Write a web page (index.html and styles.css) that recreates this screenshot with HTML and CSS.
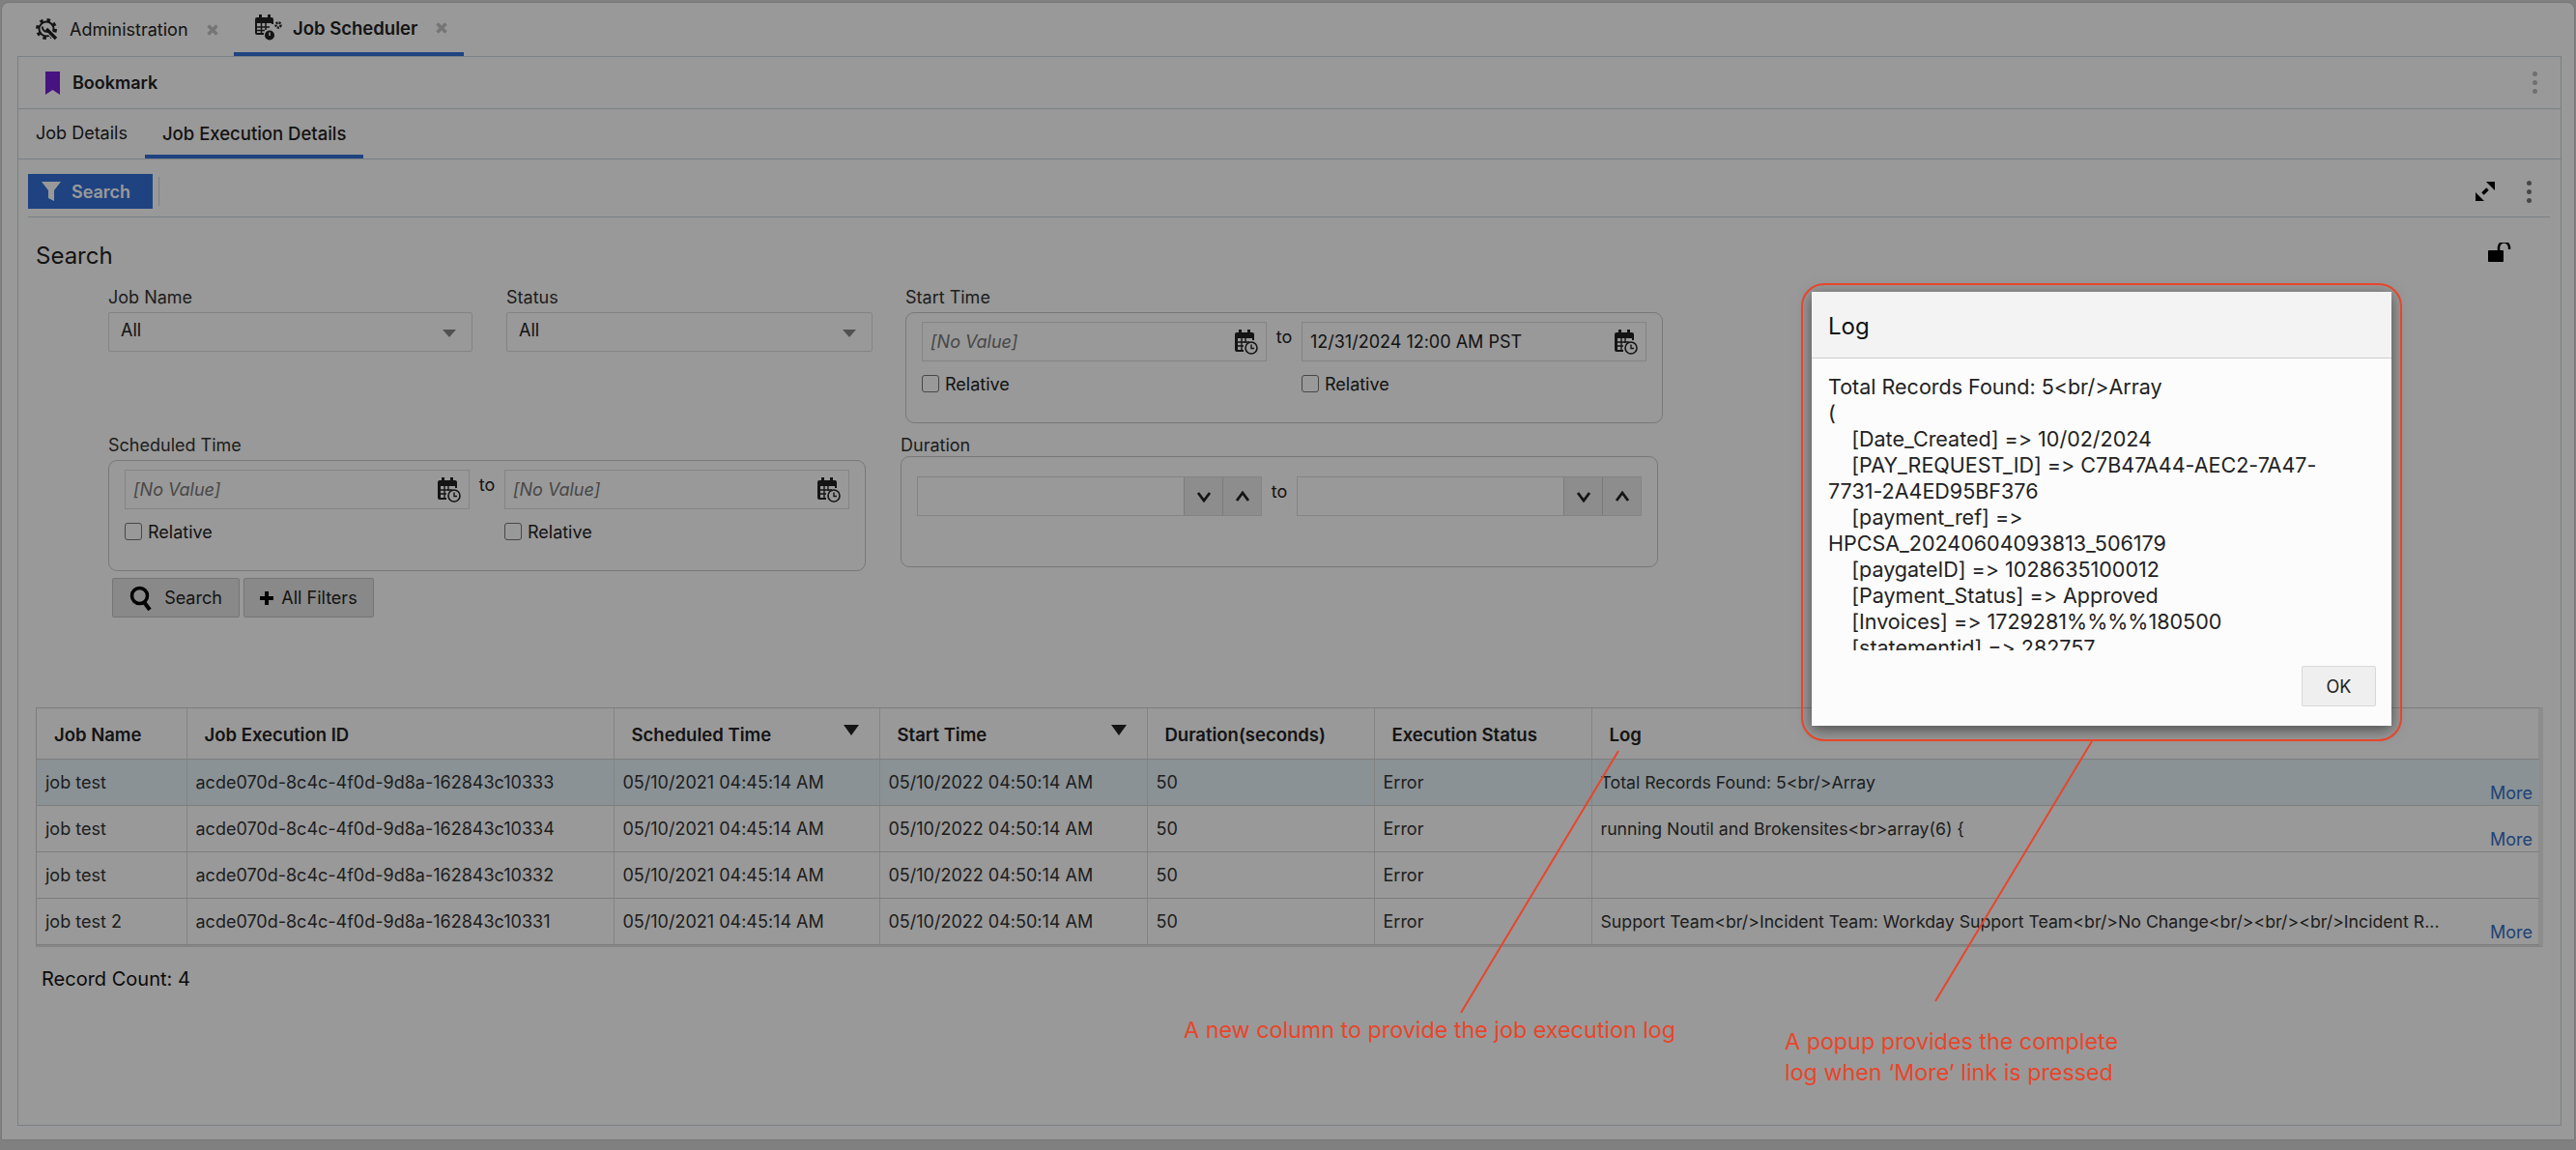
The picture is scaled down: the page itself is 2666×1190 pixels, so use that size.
FILE: index.html
```html
<!DOCTYPE html>
<html lang="en">
<head>
    <meta charset="UTF-8">
    <title>Job Scheduler</title>
    <link rel="stylesheet" href="styles.css">
</head>
<body>
    <svg class="icon_defs" width="0" height="0">
        <symbol id="cal_clock" viewBox="0 0 24 26">
            <path d="M4 0h3v3h6V0h3v3h2a2 2 0 0 1 2 2v6h-2V9H3v12h6v2H2a2 2 0 0 1-2-2V5a2 2 0 0 1 2-2h2z" fill="#222"/>
            <path d="M3 13h12M3 17h6M7 9v13M11 9v5" stroke="#222" stroke-width="1.4" fill="none"/>
            <circle cx="17" cy="19" r="6" fill="none" stroke="#222" stroke-width="1.6"/>
            <path d="M17 15.5V19.5h3" fill="none" stroke="#222" stroke-width="1.4"/>
        </symbol>
        <symbol id="close_x" viewBox="0 0 12 12">
            <path d="M1.500 1.500l9 9M10.500 1.500l-9 9" stroke="#c4c4c4" stroke-width="3.400" fill="none"/>
        </symbol>
    </svg>

    <div class="shell">
        <!-- Top level tabs -->
        <div class="top_tabs">
            <div class="top_tab">
                <svg class="gear_icon" width="24" height="24" viewBox="0 0 24 24" fill="none" stroke="#222">
                    <circle cx="11" cy="11" r="7.500" stroke-width="2"/>
                    <circle cx="11" cy="11" r="9.500" stroke-width="3" stroke-dasharray="3.500 4"/>
                    <path d="M14 14l9 9" stroke="#fff" stroke-width="6"/>
                    <path d="M11 11l10 10" stroke-width="3.400"/>
                    <path d="M7 8.500a4.500 4.500 0 0 0 6 5" stroke-width="2"/>
                </svg>
                <span class="tab_label">Administration</span>
                <svg class="tab_close" width="12" height="12"><use href="#close_x"/></svg>
            </div>
            <div class="top_tab active">
                <svg class="sched_icon" width="28" height="27" viewBox="0 0 28 27">
                    <path d="M4 0h3v3h6V0h3v3h1a2 2 0 0 1 2 2v5h-2V9H2v10h7v2H2a2 2 0 0 1-2-2V5a2 2 0 0 1 2-2h2z" fill="#222"/>
                    <path d="M2 13h13M2 16.500h8M6.500 9v10M11 9v7" stroke="#222" stroke-width="1.500"/>
                    <circle cx="15" cy="21.500" r="5" fill="#222"/>
                    <path d="M15 18.500v3.500" stroke="#fff" stroke-width="1.500"/>
                    <circle cx="24" cy="11" r="2.500" fill="none" stroke="#222" stroke-width="2.500" stroke-dasharray="2 1"/>
                </svg>
                <span class="tab_label">Job Scheduler</span>
                <svg class="tab_close" width="12" height="12"><use href="#close_x"/></svg>
            </div>
        </div>

        <div class="panel">
            <!-- Bookmark bar -->
            <div class="bookmark_bar">
                <svg width="15" height="24" viewBox="0 0 15 24"><path d="M0 0h15v24l-7.500-5L0 24z" fill="#7521d8"/></svg>
                <span class="bookmark_label">Bookmark</span>
                <span class="dots light"><i></i><i></i><i></i></span>
            </div>

            <!-- Sub tabs -->
            <div class="sub_tabs">
                <div class="sub_tab">Job Details</div>
                <div class="sub_tab active">Job Execution Details</div>
            </div>

            <!-- Toolbar -->
            <div class="toolbar">
                <button class="filter_btn">
                    <svg width="20" height="20" viewBox="0 0 20 20"><path d="M0 0h20l-7 9v11l-6-3V9z" fill="#fff"/></svg>
                    Search
                </button>
                <span class="tool_sep"></span>
                <svg class="expand_icon" width="22" height="22" viewBox="0 0 22 22"><path d="M12 1h9v9zM1 21v-9l9 9z" fill="#000"/><path d="M13.500 8.500l-5 5" stroke="#000" stroke-width="3.600" fill="none"/></svg>
                <span class="dots"><i></i><i></i><i></i></span>
            </div>

            <div class="search_head">
                <h2>Search</h2>
                <svg class="lock_icon" width="24" height="20" viewBox="0 0 24 20"><rect x="0" y="8" width="16" height="12" rx="1" fill="#000"/><path d="M11 8V5a5 5 0 0 1 11 0v2" fill="none" stroke="#000" stroke-width="2.500"/></svg>
            </div>

            <!-- Search form -->
            <div class="form_row first">
                <div class="field job_name">
                    <label>Job Name</label>
                    <div class="select_box">All<span class="caret"></span></div>
                </div>
                <div class="field status">
                    <label>Status</label>
                    <div class="select_box">All<span class="caret"></span></div>
                </div>
                <div class="field start_time">
                    <label>Start Time</label>
                    <div class="range_box">
                        <div class="range_col">
                            <div class="input_box"><em>[No Value]</em><svg width="24" height="26"><use href="#cal_clock"/></svg></div>
                            <div class="relative"><span class="check"></span>Relative</div>
                        </div>
                        <span class="range_to">to</span>
                        <div class="range_col">
                            <div class="input_box">12/31/2024 12:00 AM PST<svg width="24" height="26"><use href="#cal_clock"/></svg></div>
                            <div class="relative"><span class="check"></span>Relative</div>
                        </div>
                    </div>
                </div>
            </div>

            <div class="form_row second">
                <div class="field sched_time">
                    <label>Scheduled Time</label>
                    <div class="range_box">
                        <div class="range_col">
                            <div class="input_box"><em>[No Value]</em><svg width="24" height="26"><use href="#cal_clock"/></svg></div>
                            <div class="relative"><span class="check"></span>Relative</div>
                        </div>
                        <span class="range_to">to</span>
                        <div class="range_col">
                            <div class="input_box"><em>[No Value]</em><svg width="24" height="26"><use href="#cal_clock"/></svg></div>
                            <div class="relative"><span class="check"></span>Relative</div>
                        </div>
                    </div>
                </div>
                <div class="field duration">
                    <label>Duration</label>
                    <div class="range_box tall">
                        <div class="number_box">
                            <span class="spin"><svg width="16" height="12" viewBox="0 0 16 12"><path d="M2 2l6 8 6-8" fill="none" stroke="#222" stroke-width="2.800"/></svg></span>
                            <span class="spin"><svg width="16" height="12" viewBox="0 0 16 12"><path d="M2 10l6-8 6 8" fill="none" stroke="#222" stroke-width="2.800"/></svg></span>
                        </div>
                        <span class="range_to">to</span>
                        <div class="number_box">
                            <span class="spin"><svg width="16" height="12" viewBox="0 0 16 12"><path d="M2 2l6 8 6-8" fill="none" stroke="#222" stroke-width="2.800"/></svg></span>
                            <span class="spin"><svg width="16" height="12" viewBox="0 0 16 12"><path d="M2 10l6-8 6 8" fill="none" stroke="#222" stroke-width="2.800"/></svg></span>
                        </div>
                    </div>
                </div>
            </div>

            <div class="form_buttons">
                <button class="plain_btn search_btn">
                    <svg width="24" height="26" viewBox="0 0 24 26"><circle cx="10.500" cy="10.500" r="8" fill="none" stroke="#000" stroke-width="3.500"/><path d="M15 17l6 8" stroke="#000" stroke-width="4"/></svg>
                    Search
                </button>
                <button class="plain_btn filters_btn">
                    <svg width="14" height="14" viewBox="0 0 14 14"><path d="M5 0h4v5h5v4H9v5H5V9H0V5h5z" fill="#000"/></svg>
                    All Filters
                </button>
            </div>

            <!-- Results table -->
            <div class="table_wrap">
                <table class="results">
                    <thead>
                        <tr>
                            <th class="col_name">Job Name</th>
                            <th class="col_id">Job Execution ID</th>
                            <th class="col_time sortable">Scheduled Time</th>
                            <th class="col_time2 sortable">Start Time</th>
                            <th class="col_dur">Duration(seconds)</th>
                            <th class="col_status">Execution Status</th>
                            <th class="col_log">Log</th>
                        </tr>
                    </thead>
                    <tbody>
                        <tr class="selected">
                            <td>job test</td>
                            <td>acde070d-8c4c-4f0d-9d8a-162843c10333</td>
                            <td>05/10/2021 04:45:14 AM</td>
                            <td>05/10/2022 04:50:14 AM</td>
                            <td>50</td>
                            <td>Error</td>
                            <td><div class="log_cell"><span>Total Records Found: 5&lt;br/&gt;Array</span><a class="more">More</a></div></td>
                        </tr>
                        <tr>
                            <td>job test</td>
                            <td>acde070d-8c4c-4f0d-9d8a-162843c10334</td>
                            <td>05/10/2021 04:45:14 AM</td>
                            <td>05/10/2022 04:50:14 AM</td>
                            <td>50</td>
                            <td>Error</td>
                            <td><div class="log_cell"><span>running Noutil and Brokensites&lt;br&gt;array(6) {</span><a class="more">More</a></div></td>
                        </tr>
                        <tr>
                            <td>job test</td>
                            <td>acde070d-8c4c-4f0d-9d8a-162843c10332</td>
                            <td>05/10/2021 04:45:14 AM</td>
                            <td>05/10/2022 04:50:14 AM</td>
                            <td>50</td>
                            <td>Error</td>
                            <td></td>
                        </tr>
                        <tr>
                            <td>job test 2</td>
                            <td>acde070d-8c4c-4f0d-9d8a-162843c10331</td>
                            <td>05/10/2021 04:45:14 AM</td>
                            <td>05/10/2022 04:50:14 AM</td>
                            <td>50</td>
                            <td>Error</td>
                            <td><div class="log_cell"><span>Support Team&lt;br/&gt;Incident Team: Workday Support Team&lt;br/&gt;No Change&lt;br/&gt;&lt;br/&gt;&lt;br/&gt;Incident R...</span><a class="more">More</a></div></td>
                        </tr>
                    </tbody>
                </table>
            </div>
            <div class="record_count">Record Count: 4</div>
        </div>
    </div>

    <!-- Dimmed layer behind the popup -->
    <div class="dim"></div>

    <!-- Log popup -->
    <div class="modal">
        <div class="modal_head">Log</div>
        <div class="modal_body">Total Records Found: 5&lt;br/&gt;Array
(
    [Date_Created] =&gt; 10/02/2024
    [PAY_REQUEST_ID] =&gt; C7B47A44-AEC2-7A47-7731-2A4ED95BF376
    [payment_ref] =&gt; HPCSA_20240604093813_506179
    [paygateID] =&gt; 1028635100012
    [Payment_Status] =&gt; Approved
    [Invoices] =&gt; 1729281%%%%180500
    [statementid] =&gt; 282757</div>
        <div class="modal_foot"><button class="ok_btn">OK</button></div>
    </div>

    <!-- Annotations drawn on top of the screenshot -->
    <div class="callout_ring"></div>
    <svg class="callout_lines" width="2666" height="1190" viewBox="0 0 2666 1190">
        <path d="M1675 777L1512 1048M2165 767L2003 1036" stroke="#e8452a" stroke-width="2" fill="none"/>
    </svg>
    <div class="note note_column">A new column to provide the job execution log</div>
    <div class="note note_popup">A popup provides the complete<br>log when ‘More’ link is pressed</div>
</body>
</html>
```
FILE: styles.css
```css
/* General page */
body {
    margin: 0;
    width: 2666px;
    height: 1190px;
    overflow: hidden;
    background: #d6d6d6;
    color: #222;
    font-family: 'Inter', 'Liberation Sans', sans-serif;
    font-size: 18px;
    font-variant-ligatures: none;
    font-feature-settings: "calt" 0;
}

.icon_defs {
    display: none;
}

.shell {
    box-sizing: border-box;
    width: 2664px;
    height: 1178px;
    margin: 2px 0 0 1px;
    padding-left: 16px;
    background: #fff;
    border: 1px solid #c8c8c8;
    border-radius: 8px 8px 0 0;
}

/* Top tabs */
.top_tabs {
    display: flex;
    height: 55px;
}

.top_tab {
    display: flex;
    align-items: center;
    box-sizing: border-box;
    height: 55px;
    padding: 0 0 0 19px;
}

.top_tab:first-child {
    width: 224px;
}

.top_tab.active {
    width: 238px;
    padding-left: 22px;
    border-bottom: 4px solid #3470d8;
}

.tab_label {
    margin-left: 11px;
}

.active .tab_label {
    margin-left: 11px;
    font-size: 18.500px;
    font-weight: 600;
}

.tab_close {
    margin-left: 19px;
}

/* Main panel */
.panel {
    box-sizing: border-box;
    width: 2633px;
    height: 1107px;
    background: #fff;
    border: 1px solid #ccd5de;
}

.bookmark_bar {
    display: flex;
    align-items: center;
    box-sizing: border-box;
    height: 54px;
    padding: 0 24px 0 28px;
    border-bottom: 1px solid #ccd5de;
}

.bookmark_label {
    flex: 1;
    margin-left: 13px;
    font-weight: 600;
}

.dots {
    display: flex;
    flex-direction: column;
    gap: 4px;
}

.dots i {
    width: 5px;
    height: 5px;
    border-radius: 50%;
    background: #777;
}

.dots.light i {
    background: #bbb;
}

.sub_tabs {
    display: flex;
    box-sizing: border-box;
    height: 52px;
    border-bottom: 1px solid #ccd5de;
}

.sub_tab {
    box-sizing: border-box;
    height: 51px;
    padding: 14px 18px 0;
}

.sub_tab.active {
    border-bottom: 4px solid #3470d8;
    font-size: 18.500px;
    font-weight: 500;
}

.toolbar {
    display: flex;
    align-items: center;
    box-sizing: border-box;
    height: 60px;
    margin: 0 11px 0 10px;
    padding-top: 7px;
    border-bottom: 1px solid #ccd5de;
}

.filter_btn {
    display: flex;
    align-items: center;
    gap: 11px;
    width: 129px;
    height: 36px;
    padding: 0 0 0 14px;
    border: none;
    background: #3470d8;
    color: #fff;
    font: 600 18px 'Inter', 'Liberation Sans', sans-serif;
}

.tool_sep {
    width: 1px;
    height: 30px;
    margin-left: 6px;
    background: #ccd5de;
}

.expand_icon {
    margin-left: auto;
}

.toolbar .dots {
    margin: 0 19px 0 32px;
}

.search_head {
    display: flex;
    align-items: flex-start;
    justify-content: space-between;
    box-sizing: border-box;
    height: 72px;
    padding: 25px 51px 0 18px;
}

.search_head h2 {
    margin: 0;
    font-size: 24px;
    line-height: 29px;
    font-weight: 400;
}

.lock_icon {
    margin-top: 1px;
}

/* Search form */
.form_row {
    display: flex;
    padding-left: 93px;
}

.form_row.first {
    height: 153px;
}

.form_row.second {
    height: 148px;
}

.field label {
    display: block;
    height: 26px;
    line-height: 22px;
    color: #333;
}

.job_name {
    width: 377px;
    margin-right: 35px;
}

.status {
    width: 379px;
    margin-right: 34px;
}

.start_time,
.sched_time,
.duration {
    width: 784px;
}

.duration {
    margin-left: 36px;
}

.select_box {
    display: flex;
    justify-content: space-between;
    box-sizing: border-box;
    height: 41px;
    padding: 7px 16px 7px 12px;
    border: 1px solid #dcdcdc;
    border-radius: 2px;
}

.caret {
    width: 0;
    height: 0;
    margin-top: 10px;
    border-left: 7px solid transparent;
    border-right: 7px solid transparent;
    border-top: 8px solid #888;
}

.range_box {
    display: flex;
    box-sizing: border-box;
    height: 115px;
    padding: 9px 16px 0;
    border: 1px solid #c8c8c8;
    border-radius: 9px;
}

.range_box.tall {
    margin-top: -4px;
    padding-top: 20px;
}

.range_col {
    width: 358px;
}

.input_box {
    display: flex;
    align-items: center;
    justify-content: space-between;
    box-sizing: border-box;
    height: 41px;
    padding: 0 8px;
    border: 1px solid #dcdcdc;
}

.input_box em {
    color: #777;
}

.range_to {
    width: 36px;
    text-align: center;
    line-height: 32px;
}

.relative {
    display: flex;
    align-items: center;
    height: 18px;
    margin-top: 14px;
}

.check {
    box-sizing: border-box;
    width: 18px;
    height: 18px;
    margin-right: 6px;
    border: 1.500px solid #777;
    border-radius: 3px;
}

.number_box {
    display: flex;
    justify-content: flex-end;
    box-sizing: border-box;
    width: 358px;
    height: 41px;
    border: 1px solid #dcdcdc;
}

.spin {
    display: flex;
    align-items: center;
    justify-content: center;
    width: 39px;
    background: #ececec;
    border-left: 1px solid #ccc;
}

.form_buttons {
    display: flex;
    gap: 4px;
    padding-left: 97px;
}

.plain_btn {
    display: flex;
    align-items: center;
    justify-content: center;
    box-sizing: border-box;
    height: 41px;
    border: 1px solid #c4c4c4;
    border-radius: 2px;
    background: #e4e4e4;
    color: #222;
    font: 18px 'Inter', 'Liberation Sans', sans-serif;
}

.search_btn {
    gap: 12px;
    width: 132px;
}

.filters_btn {
    gap: 8px;
    width: 135px;
}

/* Results table */
.table_wrap {
    box-sizing: border-box;
    width: 2595px;
    height: 248px;
    margin: 93px 0 0 18px;
    border-top: 1px solid #d0d0d0;
    border-left: 1px solid #d0d0d0;
    border-right: 5px solid #ececec;
    border-bottom: 3px solid #e0e0e0;
}

.results {
    width: 2590px;
    border-collapse: collapse;
    table-layout: fixed;
}

.results th {
    position: relative;
    box-sizing: border-box;
    height: 52px;
    padding: 3px 0 0 18px;
    text-align: left;
    font-size: 18.500px;
    font-weight: 600;
    border-right: 1px solid #dcdcdc;
    border-bottom: 1px solid #d0d0d0;
}

.sortable::after {
    content: "";
    position: absolute;
    top: 17px;
    right: 21px;
    border-left: 8px solid transparent;
    border-right: 8px solid transparent;
    border-top: 11px solid #222;
}

.results th:last-child,
.results td:last-child {
    border-right: none;
}

.col_name { width: 155px; }
.col_id { width: 442px; }
.col_time { width: 275px; }
.col_time2 { width: 277px; }
.col_dur { width: 235px; }
.col_status { width: 225px; }

.results td {
    box-sizing: border-box;
    height: 48px;
    padding: 0 0 0 9px;
    color: #333;
    white-space: nowrap;
    border-right: 1px solid #dcdcdc;
    border-bottom: 1px solid #d0d0d0;
}

.results tr.selected td {
    background: #e6f3fb;
}

.log_cell {
    display: flex;
    justify-content: space-between;
    height: 47px;
    font-size: 17.700px;
    line-height: 47px;
}

.more {
    align-self: flex-end;
    margin-right: 7px;
    font-size: 18px;
    line-height: 25px;
    color: #3470c4;
}

.record_count {
    padding: 21px 0 0 24px;
    font-size: 20px;
    color: #111;
}

/* Dim layer and popup */
.dim {
    position: absolute;
    top: 0;
    left: 0;
    width: 2666px;
    height: 1190px;
    background: rgba(0, 0, 0, 0.4);
}

.modal {
    position: absolute;
    top: 302px;
    left: 1875px;
    box-sizing: border-box;
    width: 600px;
    height: 449px;
    background: #fcfcfc;
    box-shadow: 0 4px 14px rgba(0, 0, 0, 0.5);
}

.modal_head {
    box-sizing: border-box;
    height: 69px;
    padding: 21px 17px 0;
    background: #f3f3f3;
    border-bottom: 1px solid #ccc;
    font-size: 24px;
    color: #111;
}

.modal_body {
    height: 302px;
    padding: 16px 34px 0 17px;
    box-sizing: border-box;
    overflow: hidden;
    white-space: pre-wrap;
    font-size: 21.500px;
    line-height: 27px;
    color: #222;
}

.modal_foot {
    display: flex;
    justify-content: flex-end;
    padding: 16px 16px 0 0;
}

.ok_btn {
    width: 77px;
    height: 42px;
    border: 1px solid #d8d8d8;
    border-radius: 2px;
    background: #efefef;
    color: #222;
    font: 18px 'Inter', 'Liberation Sans', sans-serif;
}

/* Red annotations */
.callout_ring {
    position: absolute;
    top: 293px;
    left: 1864px;
    box-sizing: border-box;
    width: 622px;
    height: 474px;
    border: 2.500px solid #e8452a;
    border-radius: 24px;
}

.callout_lines {
    position: absolute;
    top: 0;
    left: 0;
}

.note {
    position: absolute;
    color: #e8452a;
    font-size: 23.300px;
    line-height: 32px;
}

.note_column {
    top: 1050px;
    left: 1225px;
}

.note_popup {
    top: 1062px;
    left: 1847px;
}
```
